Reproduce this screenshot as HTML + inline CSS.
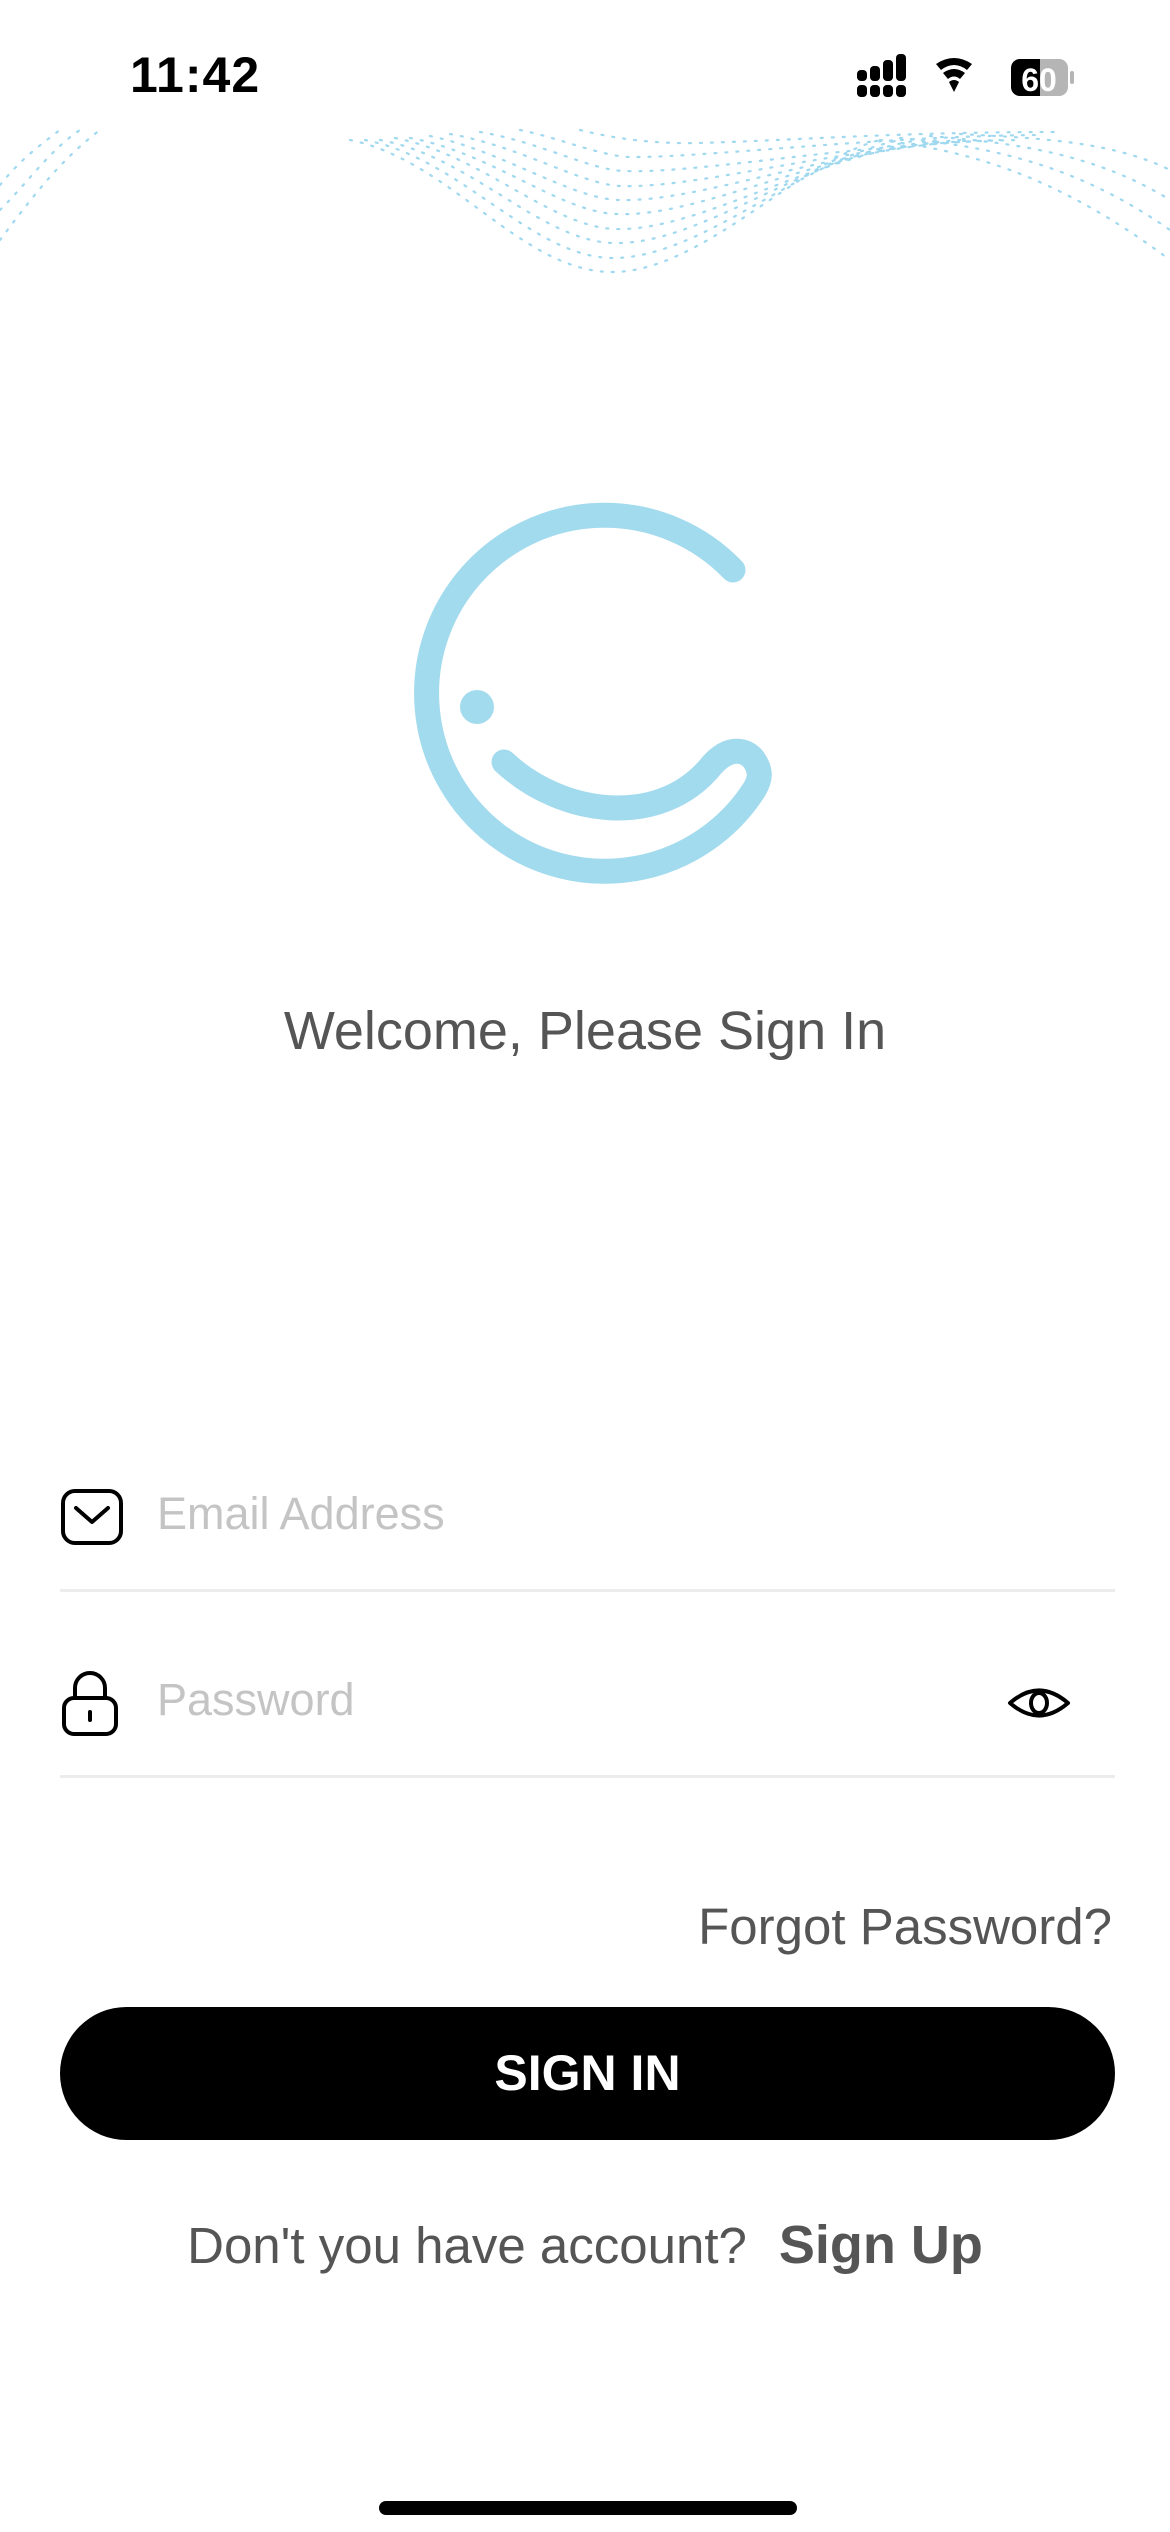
<!DOCTYPE html>
<html><head><meta charset="utf-8"><style>
html,body{margin:0;padding:0;background:#fff;}
body{width:1170px;height:2532px;position:relative;overflow:hidden;font-family:"Liberation Sans",sans-serif;}
.abs{position:absolute;}
</style></head><body>
<div class="abs" style="left:130px;top:46px;font-size:50px;font-weight:bold;color:#000;letter-spacing:1px;">11:42</div>
<svg class="abs" style="left:850px;top:50px" width="260" height="60" viewBox="0 0 260 60">
  <g fill="#000">
    <rect x="7" y="20" width="10" height="11" rx="4"/><rect x="7" y="35" width="10" height="12" rx="4"/>
    <rect x="20" y="16" width="10" height="15" rx="4"/><rect x="20" y="35" width="10" height="12" rx="4"/>
    <rect x="33" y="10" width="10" height="21" rx="4"/><rect x="33" y="35" width="10" height="12" rx="4"/>
    <rect x="46" y="4" width="10" height="27" rx="4"/><rect x="46" y="35" width="10" height="12" rx="4"/>
    <path d="M86 14 Q104 2 122 14 L117 20 Q104 10 91 20 Z"/>
    <path d="M93 23 Q104 15 115 23 L110 29 Q104 24 98 29 Z"/>
    <path d="M99 32 Q104 28 109 32 L104 42 Z"/>
    <rect x="161" y="9" width="44" height="37" rx="9"/>
    <rect x="190" y="9" width="28" height="37" rx="9" fill="#b5b5b5"/>
    <rect x="190" y="9" width="12" height="37" fill="#b5b5b5"/>
    <rect x="220" y="21" width="4" height="13" rx="2" fill="#b5b5b5"/>
  </g>
  <text x="189" y="41" font-family="Liberation Sans" font-weight="bold" font-size="32" fill="#fff" text-anchor="middle">60</text>
</svg>
<svg class="abs" style="left:0;top:125px" width="1170" height="160" viewBox="0 125 1170 160">
  <g fill="none" stroke="#9fd8ef" stroke-width="2.2" stroke-dasharray="2 9" stroke-linecap="round">
    <path d="M350 140 C450 160 520 270 610 272 C700 274 800 160 880 140"/>
    <path d="M365 140 C460 158 530 255 610 258 C700 260 800 160 900 140"/>
    <path d="M380 140 C470 156 540 240 612 243 C700 246 800 158 920 140"/>
    <path d="M395 138 C480 154 550 226 614 229 C700 232 810 155 940 140"/>
    <path d="M410 138 C490 152 560 212 616 214 C700 218 820 150 960 140"/>
    <path d="M430 136 C500 150 570 198 618 200 C700 203 830 148 980 140"/>
    <path d="M450 134 C520 146 580 184 620 186 C700 189 840 145 1000 140"/>
    <path d="M480 132 C540 142 590 170 624 171 C700 174 860 142 1020 140"/>
    <path d="M520 130 C560 138 600 156 630 157 C700 158 880 136 1040 135"/>
    <path d="M580 130 C620 140 660 144 700 143 C800 140 900 132 1060 132"/>
    <path d="M880 140 C960 150 1050 170 1170 260"/>
    <path d="M900 138 C980 146 1070 160 1170 230"/>
    <path d="M930 136 C1000 142 1090 150 1170 200"/>
    <path d="M960 134 C1030 138 1110 140 1170 170"/>
    <path d="M0 240 C30 200 60 160 100 130"/>
    <path d="M0 210 C30 180 50 150 80 130"/>
    <path d="M0 185 C20 160 40 145 60 130"/>
  </g>
</svg>
<svg class="abs" style="left:0;top:0" width="1170" height="1000" viewBox="0 0 1170 1000">
  <g fill="none" stroke="#a3dbee" stroke-width="25" stroke-linecap="round" stroke-linejoin="round">
    <path d="M504 762 C560 815 660 830 712 765 C728 747 745 748 754 760 C762 772 760 780 754 790 A178 178 0 1 1 733 570"/>
  </g>
  <circle cx="477" cy="707" r="17" fill="#a3dbee"/>
</svg>
<div class="abs" style="left:0;width:1170px;top:1000px;text-align:center;font-size:54px;color:#555;">Welcome, Please Sign In</div>
<svg class="abs" style="left:58px;top:1486px" width="70" height="64" viewBox="0 0 70 64">
  <rect x="5" y="5" width="58" height="52" rx="12" fill="none" stroke="#000" stroke-width="4"/>
  <path d="M18 22 L34 36 L50 22" fill="none" stroke="#000" stroke-width="4" stroke-linecap="round" stroke-linejoin="round"/>
</svg>
<div class="abs" style="left:157px;top:1488px;font-size:45px;color:#c4c4c4;">Email Address</div>
<div class="abs" style="left:60px;top:1589px;width:1055px;height:3px;background:#ececec;"></div>
<svg class="abs" style="left:58px;top:1668px" width="70" height="72" viewBox="0 0 70 72">
  <path d="M17 30 V20 A15 15 0 0 1 47 20 V30" fill="none" stroke="#000" stroke-width="4"/>
  <rect x="6" y="30" width="52" height="36" rx="10" fill="none" stroke="#000" stroke-width="4"/>
  <line x1="32" y1="44" x2="32" y2="52" stroke="#000" stroke-width="4" stroke-linecap="round"/>
</svg>
<div class="abs" style="left:157px;top:1674px;font-size:45px;color:#c4c4c4;">Password</div>
<svg class="abs" style="left:1004px;top:1682px" width="70" height="42" viewBox="0 0 70 42">
  <path d="M6 21 Q35 -4 64 21 Q35 46 6 21 Z" fill="none" stroke="#000" stroke-width="4" stroke-linejoin="round"/>
  <ellipse cx="35" cy="21" rx="8" ry="10" fill="none" stroke="#000" stroke-width="4"/>
</svg>
<div class="abs" style="left:60px;top:1775px;width:1055px;height:3px;background:#ececec;"></div>
<div class="abs" style="right:58px;top:1897px;font-size:51px;color:#555;">Forgot Password?</div>
<div class="abs" style="left:60px;top:2007px;width:1055px;height:133px;border-radius:67px;background:#000;color:#fff;font-size:50px;font-weight:bold;text-align:center;line-height:133px;">SIGN IN</div>
<div class="abs" style="left:0;width:1170px;top:2214px;text-align:center;color:#555;white-space:nowrap;">
  <span style="font-size:51px;">Don't you have account?</span><span style="font-size:54px;font-weight:bold;margin-left:32px;">Sign Up</span>
</div>
<div class="abs" style="left:379px;top:2501px;width:418px;height:14px;border-radius:7px;background:#000;"></div>
</body></html>
